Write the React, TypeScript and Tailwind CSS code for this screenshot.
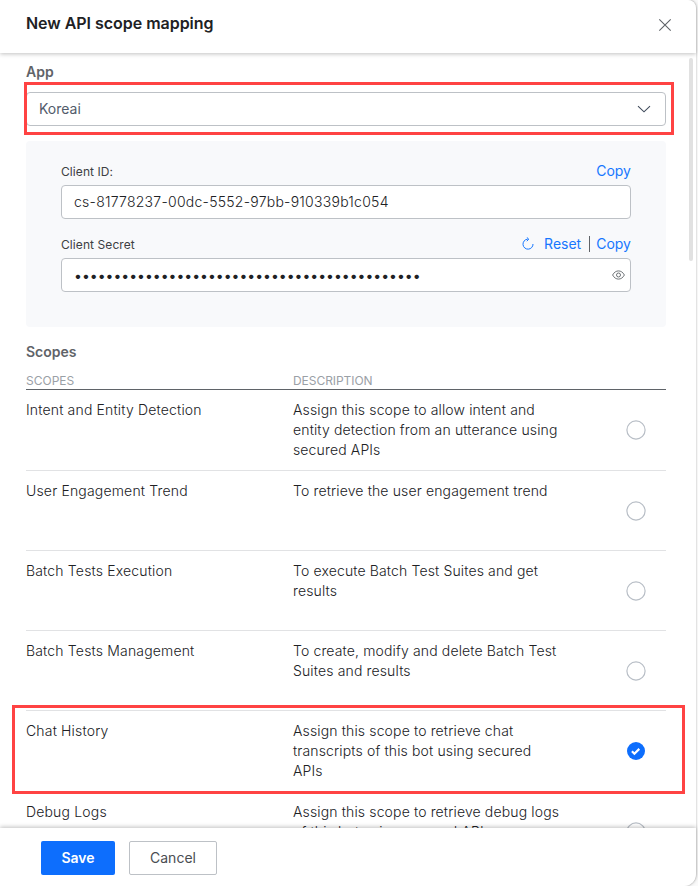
type Scope = { name: string; description: string; selected?: boolean };

const scopes: Scope[] = [
  { name: "Intent and Entity Detection", description: "Assign this scope to allow intent and entity detection from an utterance using secured APIs" },
  { name: "User Engagement Trend", description: "To retrieve the user engagement trend" },
  { name: "Batch Tests Execution", description: "To execute Batch Test Suites and get results" },
  { name: "Batch Tests Management", description: "To create, modify and delete Batch Test Suites and results" },
  { name: "Chat History", description: "Assign this scope to retrieve chat transcripts of this bot using secured APIs", selected: true },
  { name: "Debug Logs", description: "Assign this scope to retrieve debug logs of this bot using secured APIs" },
];

function Radio({ selected }: { selected?: boolean }) {
  if (selected) {
    return (
      <svg width="20" height="20" viewBox="0 0 20 20" fill="none">
        <circle cx="10" cy="10" r="9" fill="#0d6efd" />
        <path d="M5.9 10.3 8.4 12.7 13.3 7.9" stroke="#fff" strokeWidth="2.2" />
      </svg>
    );
  }
  return (
    <svg width="20" height="20" viewBox="0 0 20 20" fill="none">
      <circle cx="10" cy="10" r="9.1" fill="#fff" stroke="#b8bec6" strokeWidth="1.2" />
    </svg>
  );
}

function ScopeRow({ name, description, selected }: Scope) {
  return (
    <div className="relative flex min-h-20 shrink-0 border-b border-[#e1e2e4] pt-2.5 pb-2.5 text-sm leading-5 font-light tracking-[0.14px] text-[#202124]">
      <div className="w-[267px] shrink-0 tracking-[0.17px]">{name}</div>
      <div className="w-[273px] shrink-0 pr-1">{description}</div>
      <div className="flex flex-1 items-start justify-center pt-5 pl-10">
        <Radio selected={selected} />
      </div>
      {selected && <div className="absolute -top-1.5 -right-[19px] -left-3.5 h-[89px] border-3 border-[#ff4343]" />}
    </div>
  );
}

function Header() {
  return (
    <header className="relative z-10 flex h-[53px] shrink-0 items-center justify-between rounded-tr-lg bg-white pr-6 pb-2 pl-[26px] shadow-[0_1px_4px_rgba(0,0,0,0.25)]">
      <h1 className="text-base font-semibold tracking-[-0.03px] text-[#202124]">New API scope mapping</h1>
      <svg className="mt-1" width="14" height="14" viewBox="0 0 14 14" fill="none">
        <path d="M1.3 1.3 12.7 12.7M12.7 1.3 1.3 12.7" stroke="#5f6368" strokeWidth="1.1" />
      </svg>
    </header>
  );
}

function AppSelect() {
  return (
    <div className="relative mt-2.5 flex h-[34px] shrink-0 items-center justify-between rounded border border-[#bdc1c6] pr-3.5 pl-3 text-sm text-[#5f6368]">
      <span className="text-[#525c6b]">Koreai</span>
      <svg width="14" height="8" viewBox="0 0 14 8" fill="none">
        <path d="m1 1.2 6 5.6 6-5.6" stroke="#414c5c" strokeWidth="1.1" />
      </svg>
      <div className="absolute -top-[11px] -right-[9px] -left-[3px] h-[53px] border-3 border-[#ff4343]" />
    </div>
  );
}

function Credentials() {
  return (
    <section className="mt-[15px] h-[186px] shrink-0 rounded bg-[#f8f9fb] px-[35px] pt-5">
      <div className="flex h-5 items-center justify-between">
        <span className="pt-0.5 text-xs tracking-[0.08px] text-[#3c4043]">Client ID:</span>
        <a className="text-sm text-[#1677ff]">Copy</a>
      </div>
      <div className="mt-1 flex h-[34px] items-center rounded border border-[#bdc1c6] bg-white px-3 text-sm font-light tracking-[0.25px] text-[#202124]">
        cs-81778237-00dc-5552-97bb-910339b1c054
      </div>
      <div className="mt-[15px] flex h-5 items-center justify-between">
        <span className="pt-0.5 text-xs tracking-[0.08px] text-[#3c4043]">Client Secret</span>
        <div className="flex items-center text-sm text-[#1677ff]">
          <svg className="mr-2.5 -mt-px" width="13" height="13" viewBox="0 0 13 13" fill="none">
            <path d="M6.9 2.2H6.3A5 5 0 1 0 12 7" stroke="currentColor" />
            <path d="m5.8.4 2 1.8-2 2" stroke="currentColor" />
          </svg>
          <a>Reset</a>
          <span className="mr-1.5 ml-2 h-4 w-px bg-[#5f6368]" />
          <a>Copy</a>
        </div>
      </div>
      <div className="mt-1 flex h-[34px] items-center justify-between rounded border border-[#bdc1c6] bg-white pr-[5px] pl-3">
        <span className="pt-px text-sm text-[#202124]">{"•".repeat(44)}</span>
        <svg width="13" height="10" viewBox="0 0 13 10" fill="none" stroke="#5f6368" strokeWidth="0.9">
          <path d="M.6 5C2 2.3 4.2.9 6.5.9S11 2.3 12.4 5C11 7.7 8.8 9.1 6.5 9.1S2 7.7.6 5Z" />
          <circle cx="6.5" cy="5" r="2" />
        </svg>
      </div>
    </section>
  );
}

function Footer() {
  return (
    <footer className="relative z-10 flex h-[58px] shrink-0 gap-3.5 rounded-br-xl bg-white pt-[13px] pl-[41px] text-sm shadow-[0_-1px_4px_rgba(0,0,0,0.25)]">
      <button className="h-[34px] w-[74px] rounded-xs bg-[#0d6efd] font-semibold text-white">Save</button>
      <button className="h-[34px] w-[88px] rounded-xs border border-[#bdc1c6] text-[#4a4d52]">Cancel</button>
    </footer>
  );
}

export default function App() {
  return (
    <div className="h-[886px] w-[698px] overflow-hidden bg-[#fafafa] font-['Inter',sans-serif]">
      <div className="flex h-[886px] w-[696px] flex-col rounded-tr-lg rounded-br-xl bg-white shadow-[0_0_2px_rgba(0,0,0,0.35)]">
        <Header />
        <main className="flex min-h-0 flex-1 overflow-hidden pl-[26px]">
          <div className="flex w-[640px] shrink-0 flex-col pt-[9px]">
            <h2 className="h-5 shrink-0 text-sm leading-5 font-semibold text-[#5f6368]">App</h2>
            <AppSelect />
            <Credentials />
            <h2 className="mt-[15px] h-5 shrink-0 text-sm leading-5 font-semibold text-[#5f6368]">Scopes</h2>
            <div className="mt-[11px] flex h-[17px] shrink-0 border-b border-[#5f6368] text-xs leading-4 text-[#9aa0a6]">
              <span className="w-[267px]">SCOPES</span>
              <span className="tracking-[-0.05px]">DESCRIPTION</span>
            </div>
            {scopes.map((scope) => (
              <ScopeRow key={scope.name} {...scope} />
            ))}
          </div>
          <div className="mt-[5px] ml-[23px] h-[203px] w-1 shrink-0 rounded-full bg-[#e1e1e1]" />
        </main>
        <Footer />
      </div>
    </div>
  );
}
